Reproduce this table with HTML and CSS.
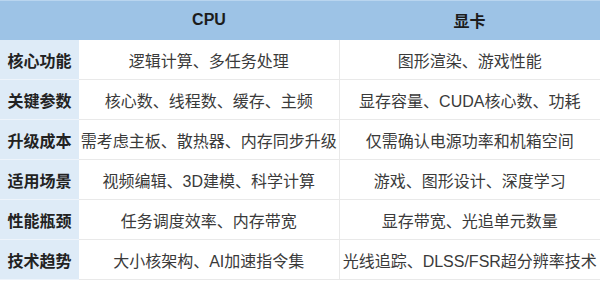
FILE: index.html
```html
<!DOCTYPE html>
<html lang="zh-CN">
<head>
    <meta charset="UTF-8" />
    <meta name="viewport" content="width=device-width, initial-scale=1.0"/>
    <title>CPU 与显卡对比</title>
    <link rel="stylesheet" href="styles.css">
</head>
<body>

    <table class="compare">
        <thead>
            <tr>
                <th class="corner"></th>
                <th>CPU</th>
                <th>显卡</th>
            </tr>
        </thead>
        <tbody>
            <tr>
                <th class="label">核心功能</th>
                <td>逻辑计算、多任务处理</td>
                <td>图形渲染、游戏性能</td>
            </tr>
            <tr>
                <th class="label">关键参数</th>
                <td>核心数、线程数、缓存、主频</td>
                <td>显存容量、CUDA核心数、功耗</td>
            </tr>
            <tr>
                <th class="label">升级成本</th>
                <td>需考虑主板、散热器、内存同步升级</td>
                <td>仅需确认电源功率和机箱空间</td>
            </tr>
            <tr>
                <th class="label">适用场景</th>
                <td>视频编辑、3D建模、科学计算</td>
                <td>游戏、图形设计、深度学习</td>
            </tr>
            <tr>
                <th class="label">性能瓶颈</th>
                <td>任务调度效率、内存带宽</td>
                <td>显存带宽、光追单元数量</td>
            </tr>
            <tr>
                <th class="label">技术趋势</th>
                <td>大小核架构、AI加速指令集</td>
                <td>光线追踪、DLSS/FSR超分辨率技术</td>
            </tr>
        </tbody>
    </table>

</body>
</html>
```

FILE: styles.css
```css
* {
    margin: 0;
    padding: 0;
    box-sizing: border-box;
}

body {
    font-family: "Liberation Sans", "Noto Sans CJK SC", sans-serif;
    background-color: #fff;
    color: #333;
}

.compare {
    width: 600px;
    border-collapse: collapse;
    table-layout: fixed;
}

.compare th,
.compare td {
    height: 40px;
    font-size: 16px;
    text-align: center;
    vertical-align: middle;
    white-space: nowrap;
    border-bottom: 1px solid #e9e9e9;
}

.compare thead th {
    height: 39px;
    background-color: #9dc3e6;
    color: #1c1c1c;
    font-weight: bold;
    border-top: 1px solid #b9d5ef;
    border-bottom: 1px solid #9dc3e6;
}

.compare th.corner {
    width: 79px;
}

.compare thead th:nth-child(2) {
    width: 260px;
}

.compare th.label {
    background-color: #deebf7;
    color: #222;
    font-weight: bold;
    border-bottom: 1px solid #eef4fb;
}

.compare td {
    color: #3a3a3a;
}

.compare td + td {
    border-left: 1px solid #e9e9e9;
}
```
